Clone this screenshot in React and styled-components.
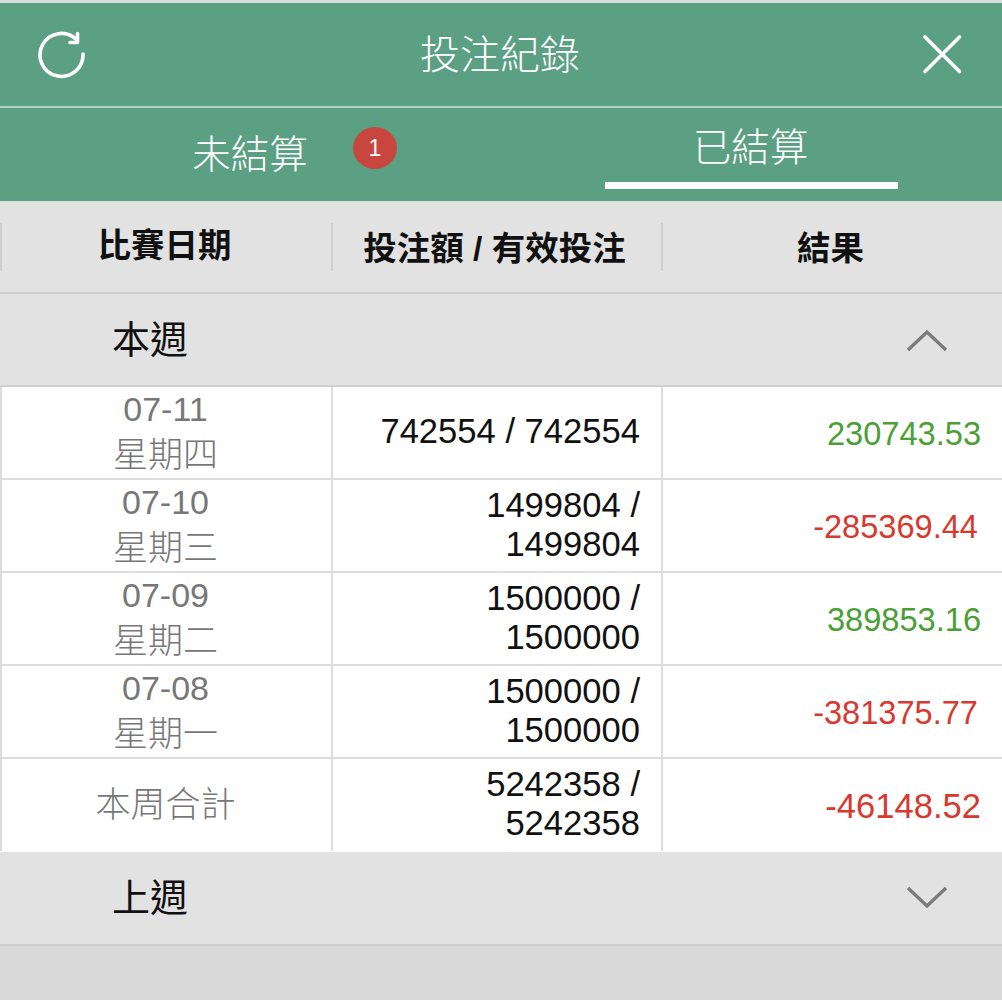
import React from "react";
import styled, { createGlobalStyle } from "styled-components";

const Global = createGlobalStyle`
  html, body { margin: 0; padding: 0; background: #d9d9d9; }
  body { font-family: "Liberation Sans", "Noto Sans CJK TC", sans-serif; }
  * { box-sizing: border-box; }
`;
const Page = styled.div`width: 1002px; height: 1000px; overflow: hidden; background: #d9d9d9; border-top: 3px solid #dcdcdc;`;
const TitleBar = styled.header`
  height: 105px; background: #5ca083; border-bottom: 2px solid #b4cfc3;
  display: flex; align-items: center; justify-content: space-between; padding: 0 34px 0 36px; color: #fff;
`;
const Title = styled.h1`margin: 0 4px 0 0; font-size: 40px; font-weight: 300; line-height: 1; color: #fff;`;
const IconSlot = styled.span`display: flex; width: 52px; justify-content: center; margin-bottom: 2px;`;
const Tabs = styled.nav`height: 93px; background: #5ca083; display: grid; grid-template-columns: 500px 1fr 104px;`;
const Tab = styled.div`
  position: relative; color: #fff; font-size: 38.5px; font-weight: 300; line-height: 1;
  display: flex; justify-content: center; align-items: flex-start; padding-top: ${p => p.$top}px;
  ${p => p.$active ? `&::after { content: ""; position: absolute; left: 105px; right: 0; top: 74px; height: 7px; background: #fff; }` : ""}
`;
const ActiveLabel = styled.span`margin-left: 103px;`;
const Badge = styled.span`
  position: absolute; left: 353px; top: 19px; width: 44px; height: 42px; border-radius: 50%;
  background: #c9463f; color: #fff; font-size: 23px; display: flex; align-items: center; justify-content: center;
`;
const HeaderRow = styled.div`
  height: 93px; background: #e2e2e2; border-bottom: 2px solid #cecece; border-top: 1px solid #d5e0da;
  display: grid; grid-template-columns: 331px 330px 341px; padding-top: 21px; align-items: start;
`;
const HeaderCell = styled.div`
  height: 48px; border-left: 2px solid #cfcfcf; display: flex; justify-content: center; align-items: center;
  font-size: 33.5px; font-weight: 700; color: #111;
  padding-bottom: ${p => p.$pb}px; padding-right: ${p => p.$pr || 0}px;
`;
const Section = styled.div`
  height: ${p => p.$h}px; background: #e2e2e2; border-bottom: 2px solid #cfcfcf;
  display: flex; align-items: center; justify-content: space-between; padding: 0 54px 0 112px;
`;
const SectionLabel = styled.span`font-size: 38px; color: #111; line-height: 1;`;
const Row = styled.div`
  display: grid; grid-template-columns: 331px 330px 341px; height: 93px; background: #fff;
  border-bottom: ${p => p.$last ? "1px solid #fff" : "2px solid #dddddd"};
`;
const Cell = styled.div`
  border-left: 2px solid #dddddd; display: flex; flex-direction: column; justify-content: center;
`;
const DateCell = styled(Cell)`align-items: center; color: #777; text-align: center; padding: 0 2px 1px 0;`;
const DateNum = styled.span`font-size: 34px; line-height: 45px;`;
const DateDay = styled.span`font-size: 35px; line-height: 45px; font-weight: 300;`;
const AmountCell = styled(Cell)`align-items: flex-end; padding: 0 21px 2px 0; color: #111; font-size: 34.6px; line-height: 39px; text-align: right;`;
const ResultCell = styled(Cell)`
  align-items: flex-end; padding-right: ${p => p.$pr}px; padding-top: 2px;
  color: ${p => p.$win ? "#4a9f35" : "#d8392f"}; font-size: ${p => p.$size}px;
`;

const Refresh = () => (
  <svg width="50" height="50" viewBox="0 0 50 50" fill="none" stroke="#fff" strokeWidth="3.6" strokeLinecap="round" strokeLinejoin="round">
    <path d="M39.5 10.5A21.5 21.5 0 1 0 46 25" />
    <path d="M33 13.5h7.5V4.5" />
  </svg>
);
const Close = () => (
  <svg width="40" height="40" viewBox="0 0 40 40" stroke="#fff" strokeWidth="3.6" strokeLinecap="round"><path d="M3 3l34.5 34.5M37.5 3L3 37.5" /></svg>
);
const Chevron = ({ up }) => (
  <svg width="42" height="24" viewBox="0 0 42 24" fill="none" stroke="#7b7b7b" strokeWidth="3.4">
    <path d={up ? "M2 22L21 4l19 18" : "M2 2l19 18L40 2"} />
  </svg>
);

const rows = [
  { d: "07-11", w: "星期四", a: ["742554 / 742554"], r: "230743.53", win: true, pr: 21, s: 32.6 },
  { d: "07-10", w: "星期三", a: ["1499804 /", "1499804"], r: "-285369.44", pr: 24, s: 32.6 },
  { d: "07-09", w: "星期二", a: ["1500000 /", "1500000"], r: "389853.16", win: true, pr: 21, s: 32.6 },
  { d: "07-08", w: "星期一", a: ["1500000 /", "1500000"], r: "-381375.77", pr: 24, s: 32.6 },
  { t: "本周合計", a: ["5242358 /", "5242358"], r: "-46148.52", pr: 21, s: 34.6, last: true },
];

export default function App() {
  return (
    <Page>
      <Global />
      <TitleBar>
        <IconSlot><Refresh /></IconSlot>
        <Title>投注紀錄</Title>
        <IconSlot><Close /></IconSlot>
      </TitleBar>
      <Tabs>
        <Tab $top={28}>未結算<Badge>1</Badge></Tab>
        <Tab $active $top={21}><ActiveLabel>已結算</ActiveLabel></Tab>
      </Tabs>
      <HeaderRow>
        <HeaderCell $pb={10} $pr={4}>比賽日期</HeaderCell>
        <HeaderCell $pb={4} $pr={5}>投注額 / 有效投注</HeaderCell>
        <HeaderCell $pb={4} $pr={4}>結果</HeaderCell>
      </HeaderRow>
      <Section $h={93}>
        <SectionLabel>本週</SectionLabel>
        <Chevron up />
      </Section>
      {rows.map((r) => (
        <Row key={r.r} $last={r.last}>
          <DateCell>
            {r.t ? <DateDay>{r.t}</DateDay> : <><DateNum>{r.d}</DateNum><DateDay>{r.w}</DateDay></>}
          </DateCell>
          <AmountCell>{r.a.map((l) => <span key={l}>{l}</span>)}</AmountCell>
          <ResultCell $win={r.win} $pr={r.pr} $size={r.s}>{r.r}</ResultCell>
        </Row>
      ))}
      <Section $h={94}>
        <SectionLabel>上週</SectionLabel>
        <Chevron />
      </Section>
    </Page>
  );
}
